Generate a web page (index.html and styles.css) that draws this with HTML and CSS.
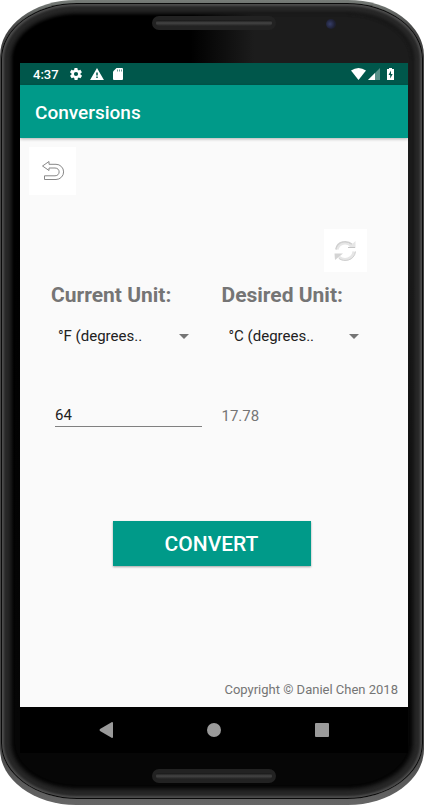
FILE: index.html
```html
<!DOCTYPE html>
<html lang="en">
<head>
<meta charset="utf-8">
<meta name="viewport" content="width=device-width, initial-scale=1">
<title>Conversions</title>
<link rel="stylesheet" href="styles.css">
</head>
<body>
<div class="phone">
  <div class="face">
    <div class="bezel bezel-top">
      <span class="speaker"></span>
      <span class="camera"></span>
    </div>
    <div class="screen">
      <div class="status-bar">
        <span class="clock">4:37</span>
        <svg class="gear" width="14" height="14" viewBox="2 2 20 20" aria-hidden="true"><path fill="#fff" d="M19.4 13c0-.3.1-.6.1-1s0-.7-.1-1l2.100-1.600c.2-.2.200-.4.100-.6l-2-3.500c-.1-.2-.4-.3-.6-.2l-2.500 1c-.5-.4-1.100-.7-1.700-1l-.4-2.600c0-.3-.2-.5-.5-.5h-4c-.2 0-.4.200-.5.400l-.4 2.700c-.6.2-1.100.6-1.700 1l-2.500-1c-.2-.1-.5 0-.6.200l-2 3.500c-.1.200-.1.500.1.600L4.600 11c0 .300-.1.700-.1 1s0 .7.100 1l-2.100 1.600c-.2.200-.2.400-.1.600l2 3.500c.1.200.4.300.6.200l2.500-1c.5.400 1.100.7 1.700 1l.4 2.600c0 .300.2.500.500.500h4c.2 0 .5-.2.500-.4l.4-2.700c.6-.2 1.200-.6 1.700-1l2.500 1c.2.100.5 0 .6-.2l2-3.500c.1-.2.100-.5-.1-.6zM12 15.500a3.500 3.500 0 1 1 0-7 3.500 3.500 0 0 1 0 7z"/></svg>
        <svg width="14" height="12" viewBox="1 2 22 19" aria-hidden="true"><path fill="#fff" d="M1 21h22L12 2zM13.200 18h-2.400v-2.400h2.400zm0-4h-2.400V9h2.400z"/></svg>
        <svg class="card" width="10" height="12" viewBox="0 0 10 12" aria-hidden="true"><path fill="#fff" d="M3.500 0H9a1 1 0 0 1 1 1v10a1 1 0 0 1-1 1H1a1 1 0 0 1-1-1V3.500z"/><path stroke="#00574b" stroke-width=".6" d="M4.500 1.500v2M6.500 1.500v2M8.500 1.500v2"/></svg>
        <span class="signals">
          <svg width="15" height="12" viewBox="0 0 15 12" aria-hidden="true"><path fill="#fff" d="M0 2.500Q7.500-2.500 15 2.500L7.500 12z"/></svg>
          <svg width="12" height="12" viewBox="0 0 12 12" aria-hidden="true"><path fill="#fff" opacity=".35" d="M0 12L12 0v12z"/><path fill="#fff" d="M0 12L7 5v7z"/></svg>
          <svg class="battery" width="7" height="12" viewBox="0 0 7 12" aria-hidden="true"><path fill="#fff" d="M2 0h3v1h2v11H0V1h2z"/><path fill="#00574b" d="M4 2.500L1.500 7h1.700v3.500L5.700 6H4z"/></svg>
        </span>
      </div>
      <header class="app-bar"><h1>Conversions</h1></header>
      <main class="content">
        <button class="tile back" type="button" aria-label="Back">
          <svg width="24" height="22" viewBox="0 0 24 22"><path fill="none" stroke="#888" d="M1.500 6L8 1.500v2.800h7a7.500 7.500 0 0 1 0 15.200H3.500v-3.700H14c5.500 0 5.500-7.800 0-7.800H8v2.500z"/></svg>
        </button>
        <form class="converter">
          <button class="tile swap" type="button" aria-label="Swap units">
            <svg width="25" height="22" viewBox="0 0 25 22"><path fill="none" stroke="#d0d0d0" stroke-width="2" d="M3 9.500C4.500 1.500 14 0 19 4.500"/><path fill="none" stroke="#e6e6e6" stroke-width="2" d="M4.500 9.500C6 3 13.500 1.800 18 6"/><path fill="#e6e6e6" d="M22.500 1v7H15z"/><path stroke="#c4c4c4" d="M15 7.500h7"/><path fill="none" stroke="#e6e6e6" stroke-width="3" d="M21 11.500C20 19.500 11 21.500 6 17"/><path fill="none" stroke="#d0d0d0" d="M22.500 11.500C21.500 20.500 11 22.500 6 18.500"/><path fill="#d4d4d4" d="M1.500 13.500H10l-8 6.500z"/></svg>
          </button>
          <div class="units">
            <div class="unit">
              <label for="from">Current Unit:</label>
              <div class="spinner"><select id="from"><option>°F (degrees..</option></select></div>
              <input id="amount" type="text" inputmode="decimal" value="64" aria-label="Amount">
            </div>
            <div class="unit">
              <label for="to">Desired Unit:</label>
              <div class="spinner"><select id="to"><option>°C (degrees..</option></select></div>
              <output for="amount from to">17.78</output>
            </div>
          </div>
          <button class="convert" type="button">CONVERT</button>
        </form>
        <footer>Copyright © Daniel Chen 2018</footer>
      </main>
      <nav class="nav-bar" aria-label="System">
        <button type="button" aria-label="Back"><svg width="14" height="16" viewBox="0 0 14 16"><path fill="#9a9a9a" d="M13 0q1 0 1 1v14q0 1-1 1L1 9Q0 8 1 7z"/></svg></button>
        <button type="button" aria-label="Home"><svg width="14" height="14" viewBox="0 0 14 14"><circle cx="7" cy="7" r="7" fill="#9a9a9a"/></svg></button>
        <button type="button" aria-label="Overview"><svg width="14" height="14" viewBox="0 0 14 14"><rect width="14" height="14" rx="1" fill="#9a9a9a"/></svg></button>
      </nav>
    </div>
    <div class="bezel bezel-bottom"><span class="speaker"></span></div>
  </div>
</div>
</body>
</html>
```
FILE: styles.css
```css
* {
  box-sizing: border-box;
}

body {
  margin: 0;
  background: #fff;
  font-family: Roboto, sans-serif;
}

button {
  border: 0;
  padding: 0;
  font-family: inherit;
}

svg {
  display: block;
}

.phone {
  min-height: 100vh;
  display: flex;
  padding: 3px 1px 6px;
  border-radius: 76px / 56px;
  background: linear-gradient(#777c78, #444 30px, #444 92%, #666);
}

.face {
  flex: 1;
  min-width: 0;
  display: flex;
  flex-direction: column;
  padding: 0 15px 0 19px;
  border-radius: 76px / 56px;
  background: linear-gradient(transparent 30%, #060606 90%), linear-gradient(90deg, #000 45%, #1c1c1c 60%);
  box-shadow: inset 0 0 0 1px #0a0a0a, inset 0 0 2px 3px #4c4c4c, inset 0 0 4px 9px #292929, inset 0 0 3px 11px #111;
}

.bezel {
  display: flex;
  justify-content: center;
  position: relative;
}

.bezel-top {
  height: 60px;
  padding-top: 13px;
}

.bezel-bottom {
  height: 46px;
  padding-top: 16px;
}

.speaker {
  width: 124px;
  height: 14px;
  border: 4px solid #222;
  border-radius: 7px;
  background: linear-gradient(#151515, #444 50%, #222);
}

.camera {
  position: absolute;
  top: 16px;
  right: 72px;
  width: 10px;
  height: 10px;
  border-radius: 50%;
  background: radial-gradient(circle at 40% 50%, #363e68, #1e2034 60%, #1c1c1c);
}

.screen {
  flex: 1;
  display: flex;
  flex-direction: column;
  background: #fafafa;
}

.status-bar {
  height: 22px;
  display: flex;
  align-items: center;
  padding: 0 14px 0 13px;
  background: #00574b;
  color: #fff;
}

.clock {
  margin-right: 11px;
  font-size: 13px;
  font-weight: 500;
}

.gear {
  width: 12px;
  margin-right: 8px;
}

.card {
  margin-left: 9px;
}

.signals {
  display: flex;
  gap: 2px;
  margin-left: auto;
}

.battery {
  margin-left: 5px;
}

.app-bar {
  height: 53px;
  display: flex;
  align-items: center;
  padding: 2px 15px 0;
  background: #009a89;
  color: #fff;
  box-shadow: 0 1px 3px rgba(0, 0, 0, .3);
}

.app-bar h1 {
  margin: 0;
  font-size: 19px;
  font-weight: 500;
}

.content {
  flex: 1;
  display: flex;
  flex-direction: column;
  padding: 9px 10px 8px 9px;
}

.tile {
  display: grid;
  place-items: center;
  background: #fff;
}

.back {
  width: 47px;
  height: 48px;
}

.swap {
  align-self: flex-end;
  width: 43px;
  height: 43px;
  margin-right: 5px;
}

.converter {
  display: flex;
  flex-direction: column;
  margin: 34px 26px 0 22px;
}

.units {
  display: grid;
  grid-template-columns: repeat(2, minmax(0, 1fr));
  gap: 20px;
  margin-top: 11px;
}

.unit {
  display: flex;
  flex-direction: column;
  color: #757575;
  font-size: 15px;
}

.unit label {
  line-height: 24px;
  font-size: 21px;
  font-weight: 700;
  white-space: nowrap;
}

.spinner {
  display: flex;
  position: relative;
  margin-top: 17px;
}

.spinner::after {
  content: "";
  position: absolute;
  top: 10px;
  right: 13px;
  border: 5px solid transparent;
  border-top-color: #757575;
  border-bottom: 0;
  pointer-events: none;
}

.spinner select {
  flex: 1;
  min-width: 0;
  height: 24px;
  border: 0;
  padding: 0 24px 0 7px;
  appearance: none;
  background: none;
  color: #212121;
  font: inherit;
}

.unit input {
  min-width: 0;
  height: 24px;
  margin: 55px 0 0 4px;
  border: 0;
  border-bottom: 1px solid #808080;
  border-radius: 0;
  padding: 0;
  background: none;
  color: #212121;
  font: inherit;
}

.unit output {
  margin-top: 54px;
  line-height: 28px;
}

.convert {
  align-self: center;
  width: 198px;
  height: 45px;
  margin-top: 91px;
  background: #009a89;
  color: #fff;
  font-size: 21px;
  font-weight: 500;
  box-shadow: 0 1px 2px rgba(0, 0, 0, .35);
}

footer {
  margin-top: auto;
  color: #757575;
  font-size: 13px;
  line-height: 18px;
  text-align: right;
}

.nav-bar {
  height: 46px;
  display: flex;
  justify-content: center;
  gap: 94px;
  background: #000;
}

.nav-bar button {
  display: grid;
  place-items: center;
  background: none;
}
```
